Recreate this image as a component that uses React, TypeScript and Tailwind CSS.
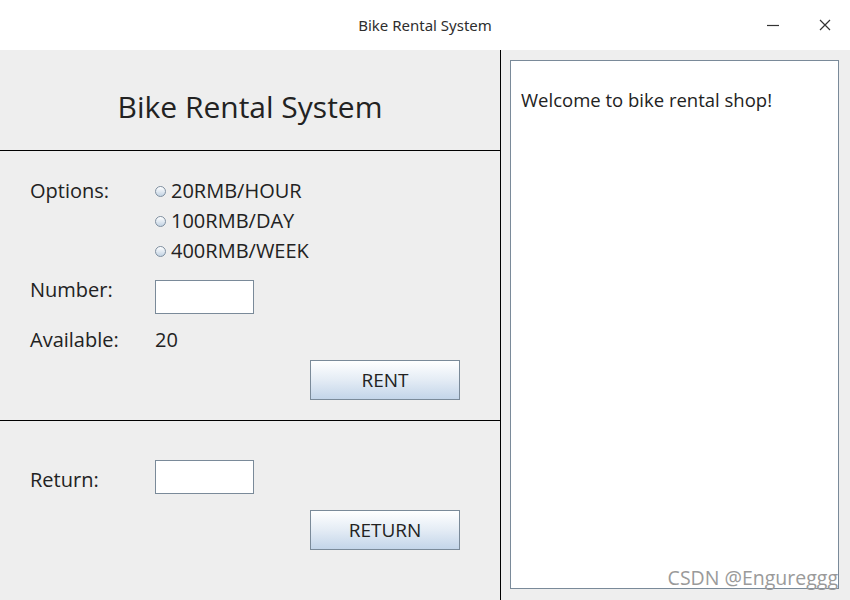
import { useState } from 'react';

const font = { fontFamily: '"Open Sans", "Noto Sans", sans-serif' };

function Radio({ label, checked, onClick }: { label: string; checked: boolean; onClick: () => void }) {
  return (
    <div className="flex h-[30px] items-center cursor-pointer" onClick={onClick}>
      <span className="mr-[5px] flex h-[11px] w-[11px] items-center justify-center rounded-full border border-[#7f8fa0] bg-gradient-to-b from-white to-[#c3d3e3]">
        {checked && <span className="h-[5px] w-[5px] rounded-full bg-[#333]" />}
      </span>
      <span>{label}</span>
    </div>
  );
}

function JButton({ label }: { label: string }) {
  return (
    <button className="h-[40px] w-[150px] border border-[#7a8a99] bg-gradient-to-b from-white via-[#e4ecf5] to-[#c3d5e9] text-[19px] text-[#222]">
      {label}
    </button>
  );
}

export default function App() {
  const [option, setOption] = useState(-1);
  const options = ['20RMB/HOUR', '100RMB/DAY', '400RMB/WEEK'];

  return (
    <div className="flex h-[600px] w-[850px] flex-col overflow-hidden bg-[#eeeeee] text-[#222]" style={font}>
      {/* title bar */}
      <div className="relative flex h-[50px] items-center justify-center bg-white text-[15px] text-[#2e2e2e]" style={{ fontFamily: '"Noto Sans", sans-serif' }}>
        Bike Rental System
        <div className="absolute right-0 top-0 flex h-full items-center">
          <span className="flex w-[54px] justify-center">
            <svg width="12" height="12" viewBox="0 0 12 12"><path d="M0 6.5h12" stroke="#333" strokeWidth="1.2" /></svg>
          </span>
          <span className="flex w-[50px] justify-center">
            <svg width="12" height="12" viewBox="0 0 12 12"><path d="M1 1l10 10M11 1L1 11" stroke="#333" strokeWidth="1.2" /></svg>
          </span>
        </div>
      </div>

      <div className="flex flex-1">
        {/* left column */}
        <div className="flex w-[501px] flex-col border-r border-black text-[20px]">
          <div className="flex h-[101px] items-center justify-center border-b border-black pt-[12px] text-[30px] text-[#222]">
            Bike Rental System
          </div>

          <div className="h-[270px] border-b border-black pl-[30px] pt-[25px]">
            <div className="flex">
              <div className="w-[125px] leading-[30px]">Options:</div>
              <div className="flex flex-col">
                {options.map((o, i) => (
                  <Radio key={o} label={o} checked={option === i} onClick={() => setOption(i)} />
                ))}
              </div>
            </div>
            <div className="mt-[14px] flex items-start">
              <div className="w-[125px] leading-[20px]">Number:</div>
              <input className="h-[34px] w-[99px] border border-[#7a8a99] bg-white px-1 outline-none" />
            </div>
            <div className="mt-[11px] flex h-[30px] items-center">
              <div className="w-[125px]">Available:</div>
              <div>20</div>
            </div>
            <div className="mt-[5px] flex pl-[280px]">
              <JButton label="RENT" />
            </div>
          </div>

          <div className="flex-1 pl-[30px] pt-[39px]">
            <div className="flex items-start">
              <div className="w-[125px] pt-[6px] leading-[27px]">Return:</div>
              <input className="h-[34px] w-[99px] border border-[#7a8a99] bg-white px-1 outline-none" />
            </div>
            <div className="mt-[16px] flex pl-[280px]">
              <JButton label="RETURN" />
            </div>
          </div>
        </div>

        {/* right column */}
        <div className="relative flex-1 pb-[11px] pl-[9px] pr-[11px] pt-[10px]">
          <div className="h-full w-full border border-[#7a8a99] bg-white px-[10px] pt-[25px] text-[18.5px] text-[#222]">
            Welcome to bike rental shop!
          </div>
          <div className="absolute bottom-[8px] right-[12px] text-[19.5px] text-[#9a9a9a]">CSDN @Engureggg</div>
        </div>
      </div>
    </div>
  );
}
